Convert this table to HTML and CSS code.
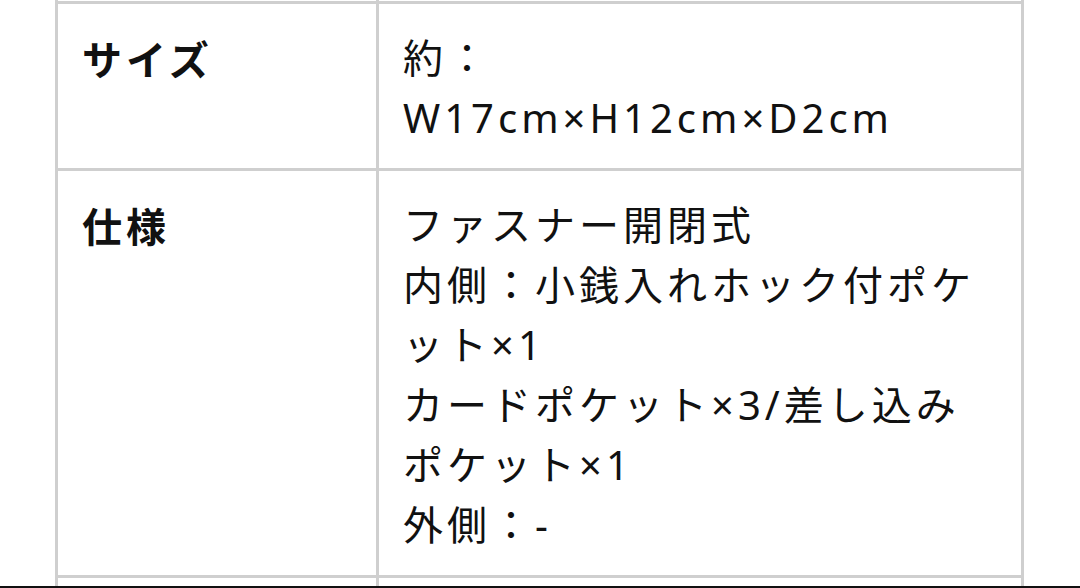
FILE: index.html
```html
<!DOCTYPE html>
<html lang="ja">
<head>
    <meta charset="UTF-8">
    <meta name="viewport" content="width=device-width, initial-scale=1.0">
    <title>商品仕様</title>
    <link rel="stylesheet" href="styles.css">
</head>
<body>
    <div class="spec-wrap">
        <table class="spec-table">
            <colgroup>
                <col class="col-label">
                <col class="col-value">
            </colgroup>
            <tr class="row-prev">
                <th>素材</th>
                <td>牛革</td>
            </tr>
            <tr>
                <th>サイズ</th>
                <td>約：<br>W17cm×H12cm×D2cm</td>
            </tr>
            <tr>
                <th>仕様</th>
                <td>ファスナー開閉式<br>内側：小銭入れホック付ポケット×1<br>カードポケット×3/差し込みポケット×1<br>外側：-</td>
            </tr>
            <tr>
                <th>生産国</th>
                <td>日本</td>
            </tr>
        </table>
    </div>
    <div class="screen-edge"></div>
</body>
</html>
```

FILE: styles.css
```css
* {
    margin: 0;
    padding: 0;
    box-sizing: border-box;
}

body {
    background: #fff;
    color: #111;
    font-family: "Noto Sans CJK JP", "Noto Sans", sans-serif;
    overflow: hidden;
}

.spec-wrap {
    padding-left: 55px;
    margin-top: -106px;
}

.spec-table {
    width: 969px;
    table-layout: fixed;
    border-collapse: collapse;
}

.col-label {
    width: 321px;
}

.spec-table th,
.spec-table td {
    border: 3px solid #cfcfcf;
    vertical-align: top;
    text-align: left;
    font-size: 40px;
    line-height: 60px;
    letter-spacing: 4px;
    padding: 24px 24px 20px;
}

.spec-table th {
    font-weight: 700;
}

.spec-table td {
    font-family: "Noto Sans", "Noto Sans CJK JP", sans-serif;
    font-weight: 400;
}

.row-prev th,
.row-prev td {
    height: 100px;
}

/* phone screen bottom edge */
.screen-edge {
    position: fixed;
    left: 0;
    right: 0;
    bottom: 0;
    height: 2px;
    background: #111;
}
```
